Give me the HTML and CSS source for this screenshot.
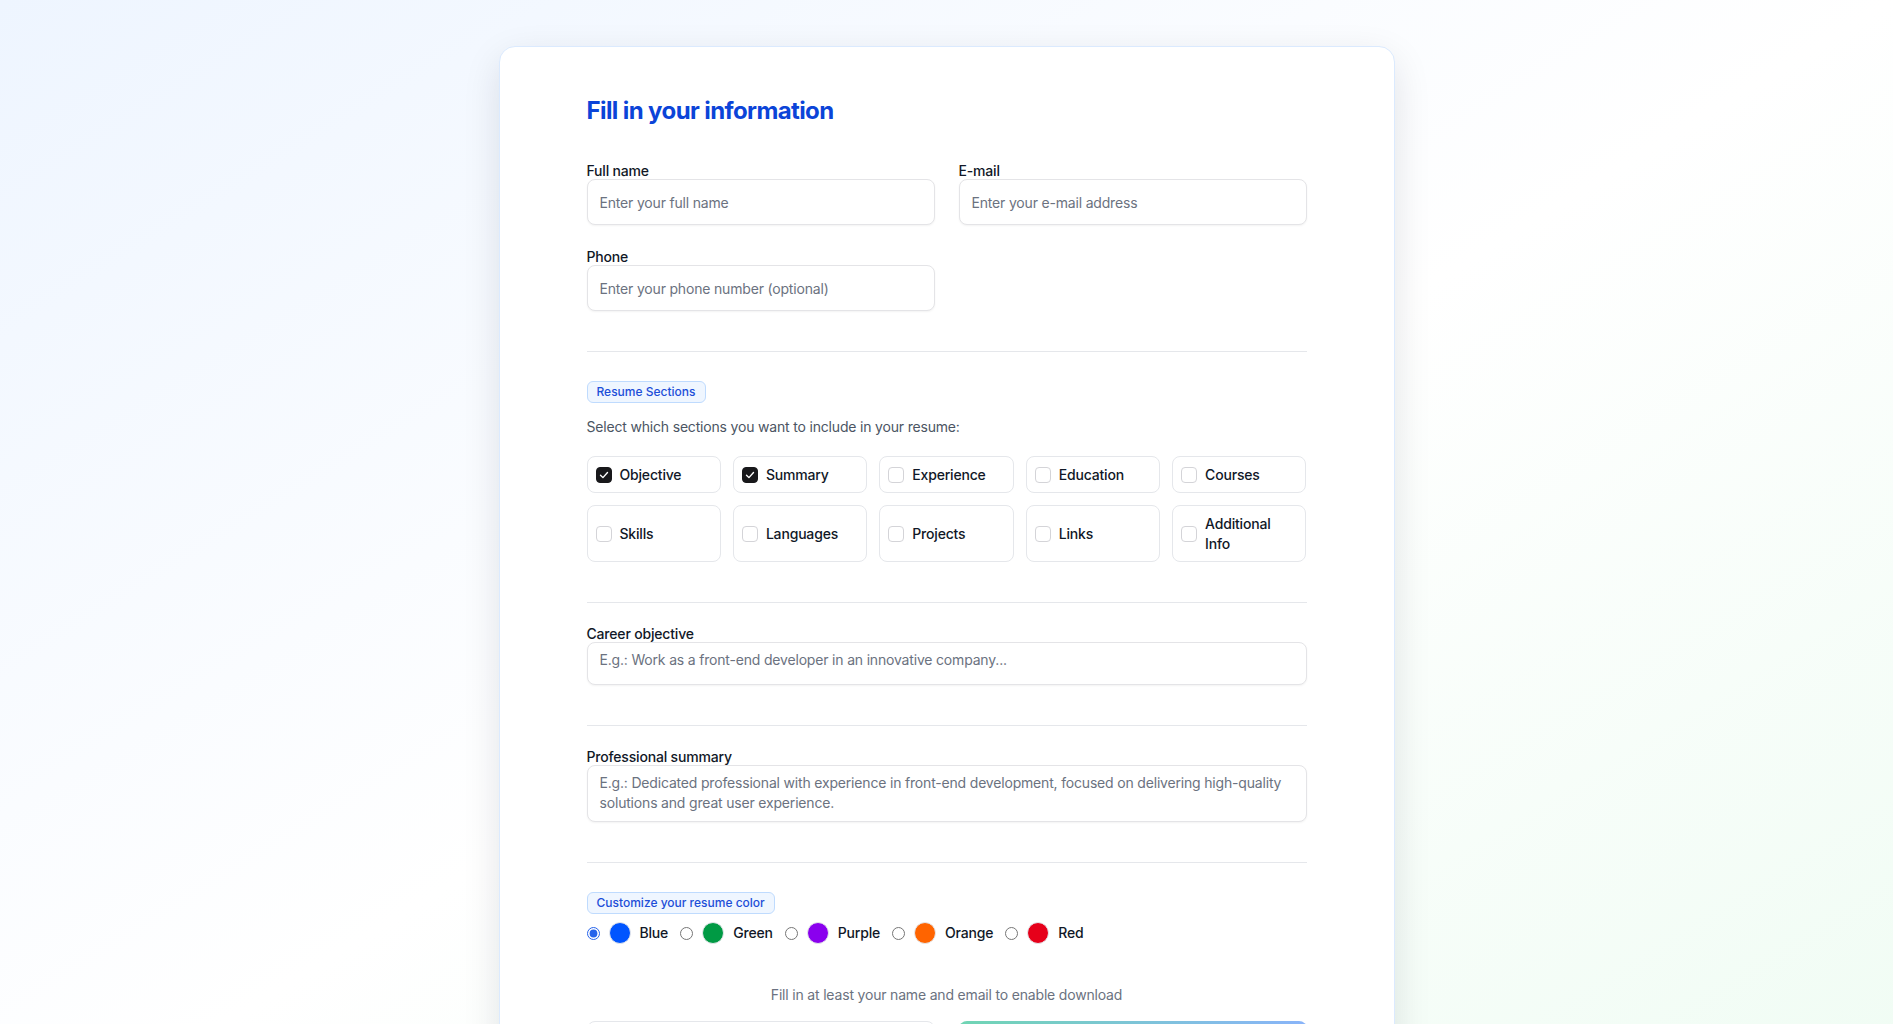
FILE: index.html
```html
<!DOCTYPE html>
<html lang="en">
<head>
    <meta charset="UTF-8">
    <meta name="viewport" content="width=device-width, initial-scale=1.0">
    <title>Resume Builder</title>
    <link rel="stylesheet" href="styles.css">
</head>
<body>
    <main class="card">
        <h1 class="title">Fill in your information</h1>

        <div class="fields">
            <div class="field">
                <label for="fullName">Full name</label>
                <input type="text" id="fullName" placeholder="Enter your full name">
            </div>
            <div class="field">
                <label for="email">E-mail</label>
                <input type="email" id="email" placeholder="Enter your e-mail address">
            </div>
            <div class="field">
                <label for="phone">Phone</label>
                <input type="tel" id="phone" placeholder="Enter your phone number (optional)">
            </div>
        </div>

        <section class="section">
            <span class="badge">Resume Sections</span>
            <p class="hint">Select which sections you want to include in your resume:</p>
            <div class="sections-grid">
                <label class="option"><input type="checkbox" checked><span class="box"><svg viewBox="0 0 16 16"><polyline points="4 8.2 6.8 11 12 5.2"/></svg></span>Objective</label>
                <label class="option"><input type="checkbox" checked><span class="box"><svg viewBox="0 0 16 16"><polyline points="4 8.2 6.8 11 12 5.2"/></svg></span>Summary</label>
                <label class="option"><input type="checkbox"><span class="box"></span>Experience</label>
                <label class="option"><input type="checkbox"><span class="box"></span>Education</label>
                <label class="option"><input type="checkbox"><span class="box"></span>Courses</label>
                <label class="option"><input type="checkbox"><span class="box"></span>Skills</label>
                <label class="option"><input type="checkbox"><span class="box"></span>Languages</label>
                <label class="option"><input type="checkbox"><span class="box"></span>Projects</label>
                <label class="option"><input type="checkbox"><span class="box"></span>Links</label>
                <label class="option"><input type="checkbox"><span class="box"></span>Additional Info</label>
            </div>
        </section>

        <section class="section">
            <div class="field">
                <label for="objective">Career objective</label>
                <textarea id="objective" class="short" placeholder="E.g.: Work as a front-end developer in an innovative company..."></textarea>
            </div>
        </section>

        <section class="section">
            <div class="field">
                <label for="summary">Professional summary</label>
                <textarea id="summary" class="tall" placeholder="E.g.: Dedicated professional with experience in front-end development, focused on delivering high-quality solutions and great user experience."></textarea>
            </div>
        </section>

        <section class="section">
            <span class="badge">Customize your resume color</span>
            <div class="colors">
                <label class="color"><input type="radio" name="color" checked><span class="swatch" style="background:#0055ff"></span>Blue</label>
                <label class="color"><input type="radio" name="color"><span class="swatch" style="background:#009a44"></span>Green</label>
                <label class="color"><input type="radio" name="color"><span class="swatch" style="background:#8a00ee"></span>Purple</label>
                <label class="color"><input type="radio" name="color"><span class="swatch" style="background:#ff6400"></span>Orange</label>
                <label class="color"><input type="radio" name="color"><span class="swatch" style="background:#e6001a"></span>Red</label>
            </div>
        </section>

        <p class="notice">Fill in at least your name and email to enable download</p>

        <div class="actions">
            <button class="btn btn-outline" type="button">Preview resume</button>
            <button class="btn btn-primary" type="button" disabled>Download PDF</button>
        </div>
    </main>
</body>
</html>
```

FILE: styles.css
```css
body {
    margin: 0;
    padding: 46px 16px;
    min-height: 100vh;
    box-sizing: border-box;
    font-family: Inter, "Noto Sans", Arial, sans-serif;
    font-size: 14px;
    letter-spacing: -0.013em;
    color: #111827;
    background: linear-gradient(to bottom right, #eef5ff, #ffffff, #effcf3);
}

.card {
    max-width: 896px;
    margin: 0 auto;
    box-sizing: border-box;
    padding: 48px 87px;
    background-color: #fff;
    border: 1px solid #dbeafe;
    border-radius: 16px;
    box-shadow: 0 12px 40px -4px rgba(15, 23, 42, 0.14);
}

.title {
    margin: 0 0 36px;
    font-size: 24px;
    line-height: 32px;
    font-weight: 700;
    letter-spacing: -0.025em;
    color: #0b44d8;
}

.fields {
    display: grid;
    grid-template-columns: 1fr 1fr;
    gap: 24px;
}

.field {
    display: flex;
    flex-direction: column;
}

    .field label {
        font-size: 14px;
        line-height: 16px;
        font-weight: 500;
        color: #111827;
    }

    .field input, .field textarea {
        box-sizing: border-box;
        width: 100%;
        margin: 0;
        font: inherit;
        font-size: 14px;
        line-height: 20px;
        letter-spacing: inherit;
        color: #111827;
        background-color: #fff;
        border: 1px solid #e4e4e7;
        border-radius: 8px;
        box-shadow: 0 1px 2px rgba(0, 0, 0, 0.05);
        outline: none;
    }

    .field input {
        height: 46px;
        padding: 0 12px;
    }

    .field textarea {
        padding: 7px 12px;
        resize: none;
        display: block;
    }

        .field textarea.short {
            height: 43px;
        }

        .field textarea.tall {
            height: 57px;
        }

    .field input::placeholder, .field textarea::placeholder {
        color: #6b7280;
    }

.section {
    margin-top: 40px;
    padding-top: 23px;
    border-top: 1px solid #e5e7eb;
}

.badge {
    display: inline-block;
    margin-top: 6px;
    padding: 2px 9px;
    font-size: 12px;
    line-height: 16px;
    font-weight: 500;
    letter-spacing: 0;
    color: #1d4ed8;
    background-color: #eff6ff;
    border: 1px solid #bfdbfe;
    border-radius: 6px;
}

.hint {
    margin: 14px 0 0;
    line-height: 20px;
    color: #4b5563;
}

.sections-grid {
    display: grid;
    grid-template-columns: repeat(5, 1fr);
    gap: 12px;
    margin-top: 19px;
}

.option {
    display: flex;
    align-items: center;
    gap: 8px;
    padding: 7.5px 8px;
    line-height: 20px;
    font-weight: 500;
    color: #111827;
    border: 1px solid #e5e7eb;
    border-radius: 8px;
    cursor: pointer;
}

    .option input {
        display: none;
    }

    .option .box {
        flex: none;
        width: 16px;
        height: 16px;
        box-sizing: border-box;
        border: 1px solid #d4d4d8;
        border-radius: 4px;
        background-color: #fff;
        display: flex;
        align-items: center;
        justify-content: center;
    }

        .option input:checked + .box {
            background-color: #18181b;
            border-color: #18181b;
        }

        .option .box svg {
            width: 14px;
            height: 14px;
            fill: none;
            stroke: #fff;
            stroke-width: 1.6;
            stroke-linecap: round;
            stroke-linejoin: round;
        }

.colors {
    display: flex;
    align-items: center;
    gap: 12px;
    margin-top: 7px;
    min-height: 24px;
}

.color {
    display: flex;
    align-items: center;
    gap: 9px;
    line-height: 20px;
    font-weight: 500;
    color: #111827;
    cursor: pointer;
}

    .color input {
        margin: 0;
        width: 13px;
        height: 13px;
        accent-color: #2563eb;
    }

    .color .swatch {
        width: 20px;
        height: 20px;
        border-radius: 50%;
        border: 1px solid #e5e7eb;
    }

.notice {
    margin: 40px 0 0;
    text-align: center;
    line-height: 20px;
    color: #6b7280;
}

.actions {
    display: grid;
    grid-template-columns: 1fr 1fr;
    gap: 24px;
    margin-top: 16px;
}

.btn {
    height: 44px;
    font: inherit;
    font-weight: 600;
    border-radius: 8px;
    cursor: pointer;
}

.btn-outline {
    color: #111827;
    background-color: #fff;
    border: 1px solid #e5e7eb;
}

.btn-primary {
    color: #fff;
    border: none;
    background: linear-gradient(to right, #10b981, #3b82f6);
    opacity: 0.6;
}
```
